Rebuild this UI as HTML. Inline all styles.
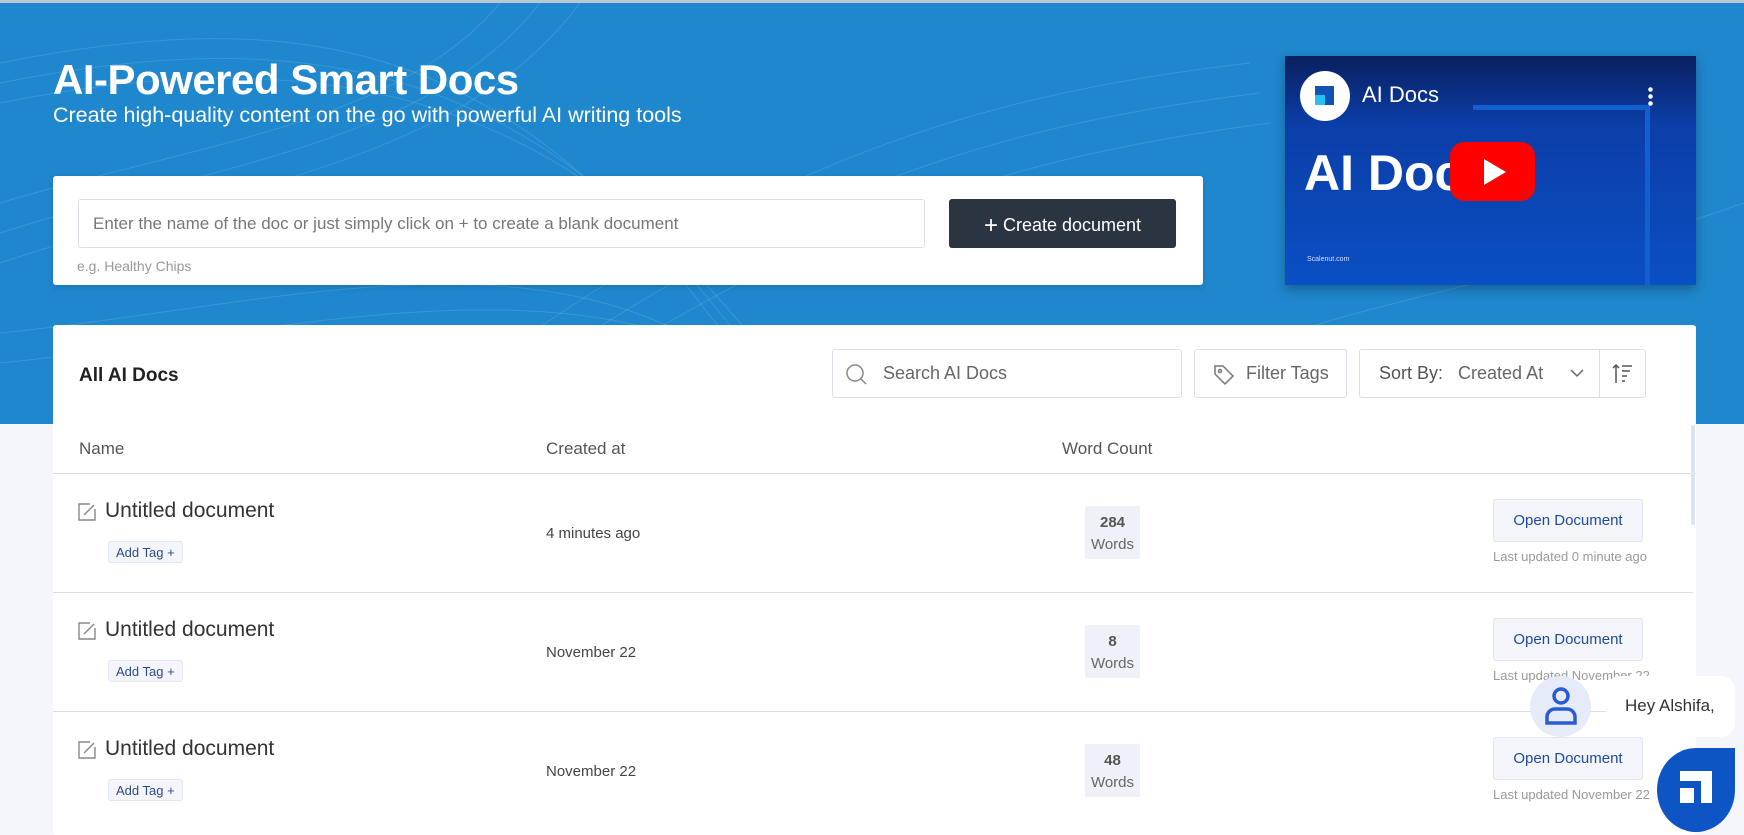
<!DOCTYPE html>
<html><head><meta charset="utf-8"><style>
*{box-sizing:border-box;margin:0;padding:0}
body{width:1744px;height:827px;overflow:hidden;background:#f4f6fb;font-family:"Liberation Sans",sans-serif;position:relative;color:#333}
.abs{position:absolute}
#hdr{left:0;top:0;width:1744px;height:424px;background:#1f87cd;border-top:3px solid #b9c6d3;overflow:hidden}
.card{background:#fff;border-radius:3px}
.btnw{background:#f3f5fa;border:1px solid #e3e7ef;border-radius:3px}
</style></head><body>
<div id="hdr" class="abs">
<svg width="1744" height="424" class="abs" style="left:0;top:0" fill="none" stroke="rgba(255,255,255,0.12)" stroke-width="1">
<path d="M0 60 C300 0 500 40 700 300 S1000 420 1300 380"/><path d="M0 80 C300 20 520 60 720 310 S1000 420 1300 395"/><path d="M0 100 C300 40 540 80 740 320 S1000 420 1300 410"/><path d="M0 200 C200 140 400 120 500 0"/><path d="M0 230 C220 160 430 140 540 0"/><path d="M0 260 C240 180 460 160 580 0"/><path d="M0 330 C300 300 600 200 800 420"/><path d="M0 360 C300 330 620 230 830 420"/><path d="M400 424 C700 200 900 100 1250 60"/><path d="M450 424 C740 220 930 130 1260 90"/><path d="M500 424 C780 240 960 160 1270 120"/><path d="M1150 424 C1250 300 1400 320 1744 200"/>
</svg>
<div class="abs" style="left:53px;top:53px;color:#fff;font-size:42px;font-weight:bold;letter-spacing:-0.5px">AI-Powered Smart Docs</div>
<div class="abs" style="left:53px;top:100px;color:#fff;font-size:21.5px">Create high-quality content on the go with powerful AI writing tools</div>
</div>
<div class="abs card" style="left:53px;top:176px;width:1150px;height:109px;box-shadow:0 2px 6px rgba(0,0,0,.15)">
<div class="abs" style="left:25px;top:23px;width:847px;height:49px;border:1px solid #dcdfe5;border-radius:3px;font-size:17px;color:#777;padding:14px 0 0 14px">Enter the name of the doc or just simply click on + to create a blank document</div>
<div class="abs" style="left:896px;top:23px;width:227px;height:49px;background:#2b3441;border-radius:3px;color:#fff;font-size:18px;padding-top:13px;text-align:center"><span style="font-size:24px;font-weight:300;vertical-align:-2px">+</span>&nbsp;Create document</div>
<div class="abs" style="left:24px;top:82px;font-size:14px;color:#999">e.g. Healthy Chips</div>
</div>
<div class="abs" style="left:1285px;top:56px;width:411px;height:229px;background:linear-gradient(180deg,#0a1f5e 0%,#0b3ea8 30%,#0a4fc4 100%);box-shadow:0 4px 10px rgba(0,0,0,.3);overflow:hidden">
<div class="abs" style="left:188px;top:49px;width:177px;height:180px;border-top:5px solid #1260d0;border-right:5px solid #1260d0"></div>
<div class="abs" style="left:15px;top:15px;width:50px;height:50px;border-radius:50%;background:#fff"><div class="abs" style="left:15px;top:15px;width:19px;height:19px;background:#1153b4"></div><div class="abs" style="left:15px;top:24px;width:10px;height:10px;background:#28c0f0"></div></div>
<div class="abs" style="left:77px;top:26px;color:#fff;font-size:22px">AI Docs</div>
<div class="abs" style="left:363px;top:30px;width:5px;height:22px;background:radial-gradient(circle,#fff 2px,transparent 2.5px) 0 0/5px 7px"></div>
<div class="abs" style="left:19px;top:88px;color:#fff;font-size:50px;font-weight:bold">AI Doc</div>
<div class="abs" style="left:165px;top:86px;width:85px;height:59px;background:#f00;border-radius:14px"></div>
<div class="abs" style="left:199px;top:103px;width:0;height:0;border-left:22px solid #fff;border-top:13px solid transparent;border-bottom:13px solid transparent"></div>
<div class="abs" style="left:22px;top:200px;color:#dde;font-size:7px">Scalenut.com</div>
</div>
<div class="abs card" style="left:53px;top:325px;width:1643px;height:510px">
<div class="abs" style="left:26px;top:40px;font-size:19px;font-weight:bold;color:#222">All AI Docs</div>
<div class="abs" style="left:779px;top:24px;width:350px;height:49px;border:1px solid #dcdfe5;border-radius:3px;font-size:18px;color:#666;padding:13px 0 0 50px">Search AI Docs
<svg class="abs" style="left:12px;top:13px" width="24" height="24" fill="none" stroke="#888" stroke-width="1.5"><circle cx="10" cy="10" r="8"/><path d="M16 16l5 5"/></svg></div>
<div class="abs" style="left:1141px;top:24px;width:153px;height:49px;border:1px solid #dcdfe5;border-radius:3px;font-size:18px;color:#666;padding:13px 0 0 51px">Filter Tags
<svg class="abs" style="left:18px;top:14px" width="22" height="22" fill="none" stroke="#777" stroke-width="1.5"><path d="M2 2h8l10 10-8 8L2 10z"/><circle cx="7" cy="7" r="1.5"/></svg></div>
<div class="abs" style="left:1306px;top:24px;width:241px;height:49px;border:1px solid #dcdfe5;border-radius:3px 0 0 3px;font-size:18px;color:#666;padding:13px 0 0 19px"><span style="color:#555">Sort By:</span>&nbsp;&nbsp; Created At
<svg class="abs" style="left:210px;top:19px" width="14" height="10" fill="none" stroke="#666" stroke-width="1.5"><path d="M1 1l6 6 6-6"/></svg></div>
<div class="abs" style="left:1546px;top:24px;width:47px;height:49px;border:1px solid #dcdfe5;border-radius:0 3px 3px 0">
<svg class="abs" style="left:12px;top:13px" width="22" height="22" fill="none" stroke="#555" stroke-width="1.5"><path d="M4 20V2M1 5l3-3 3 3M10 3h10M10 8h8M10 13h5M10 18h3"/></svg></div>
<div class="abs" style="left:26px;top:114px;font-size:17px;color:#555">Name</div>
<div class="abs" style="left:493px;top:114px;font-size:17px;color:#555">Created at</div>
<div class="abs" style="left:1009px;top:114px;font-size:17px;color:#555">Word Count</div>
<div class="abs" style="left:0;top:148px;width:1643px;height:1px;background:#dcdfe5"></div>
</div>
<div class="abs" style="left:1691px;top:425px;width:4px;height:100px;background:#dde4ee;border-radius:2px"></div>

<div class="abs" style="left:0;top:474px">
 <svg class="abs" style="left:77px;top:28px" width="20" height="20" fill="none" stroke="#888" stroke-width="1.4"><path d="M13 2H2v16h16V7"/><path d="M7 13l10-10"/></svg>
 <div class="abs" style="left:105px;top:25px;font-size:21px;color:#333;white-space:nowrap">Untitled document</div>
 <div class="abs btnw" style="left:108px;top:67px;width:75px;height:22px;font-size:13px;color:#2f4a8a;padding:3px 0 0 7px">Add Tag +</div>
 <div class="abs" style="left:546px;top:51px;font-size:15px;color:#444;white-space:nowrap">4 minutes ago</div>
 <div class="abs" style="left:1085px;top:32px;width:55px;height:53px;background:#eef1f8;border-radius:2px;text-align:center;font-size:15px;color:#666;padding-top:6px;line-height:22px"><b style="color:#555">284</b><br>Words</div>
 <div class="abs btnw" style="left:1493px;top:25px;width:150px;height:43px;font-size:15px;color:#1e4b9e;text-align:center;padding-top:12px">Open Document</div>
 <div class="abs" style="left:1493px;top:75px;font-size:13px;color:#999;white-space:nowrap">Last updated 0 minute ago</div>
</div>
<div class="abs" style="left:53px;top:592px;width:1640px;height:1px;background:#dcdfe5"></div>
<div class="abs" style="left:0;top:593px">
 <svg class="abs" style="left:77px;top:28px" width="20" height="20" fill="none" stroke="#888" stroke-width="1.4"><path d="M13 2H2v16h16V7"/><path d="M7 13l10-10"/></svg>
 <div class="abs" style="left:105px;top:25px;font-size:21px;color:#333;white-space:nowrap">Untitled document</div>
 <div class="abs btnw" style="left:108px;top:67px;width:75px;height:22px;font-size:13px;color:#2f4a8a;padding:3px 0 0 7px">Add Tag +</div>
 <div class="abs" style="left:546px;top:51px;font-size:15px;color:#444;white-space:nowrap">November 22</div>
 <div class="abs" style="left:1085px;top:32px;width:55px;height:53px;background:#eef1f8;border-radius:2px;text-align:center;font-size:15px;color:#666;padding-top:6px;line-height:22px"><b style="color:#555">8</b><br>Words</div>
 <div class="abs btnw" style="left:1493px;top:25px;width:150px;height:43px;font-size:15px;color:#1e4b9e;text-align:center;padding-top:12px">Open Document</div>
 <div class="abs" style="left:1493px;top:75px;font-size:13px;color:#999;white-space:nowrap">Last updated November 22</div>
</div>
<div class="abs" style="left:53px;top:711px;width:1640px;height:1px;background:#dcdfe5"></div>
<div class="abs" style="left:0;top:712px">
 <svg class="abs" style="left:77px;top:28px" width="20" height="20" fill="none" stroke="#888" stroke-width="1.4"><path d="M13 2H2v16h16V7"/><path d="M7 13l10-10"/></svg>
 <div class="abs" style="left:105px;top:25px;font-size:21px;color:#333;white-space:nowrap">Untitled document</div>
 <div class="abs btnw" style="left:108px;top:67px;width:75px;height:22px;font-size:13px;color:#2f4a8a;padding:3px 0 0 7px">Add Tag +</div>
 <div class="abs" style="left:546px;top:51px;font-size:15px;color:#444;white-space:nowrap">November 22</div>
 <div class="abs" style="left:1085px;top:32px;width:55px;height:53px;background:#eef1f8;border-radius:2px;text-align:center;font-size:15px;color:#666;padding-top:6px;line-height:22px"><b style="color:#555">48</b><br>Words</div>
 <div class="abs btnw" style="left:1493px;top:25px;width:150px;height:43px;font-size:15px;color:#1e4b9e;text-align:center;padding-top:12px">Open Document</div>
 <div class="abs" style="left:1493px;top:75px;font-size:13px;color:#999;white-space:nowrap">Last updated November 22</div>
</div>

<div class="abs" style="left:1530px;top:676px;width:61px;height:61px;border-radius:50%;background:#e6ebfa">
<svg class="abs" style="left:14px;top:10px" width="34" height="40" fill="none" stroke="#2a5bd7" stroke-width="3.5"><circle cx="17" cy="10" r="7"/><path d="M3 37v-6a8 8 0 0 1 8-8h12a8 8 0 0 1 8 8v6z"/></svg></div>
<div class="abs" style="left:1606px;top:676px;width:129px;height:61px;background:#fff;border-radius:14px;font-size:17px;color:#333;padding:20px 0 0 19px;white-space:nowrap">Hey Alshifa,</div>
<div class="abs" style="left:1657px;top:748px;width:78px;height:84px;background:#0d55c5;border-radius:50% 0 50% 50%">
<div class="abs" style="left:23px;top:23px;width:32px;height:32px;background:#fff"></div>
<div class="abs" style="left:23px;top:33px;width:21px;height:22px;background:#0d55c5"></div>
<div class="abs" style="left:23px;top:40px;width:14px;height:15px;background:#fff"></div>
</div>
</body></html>
